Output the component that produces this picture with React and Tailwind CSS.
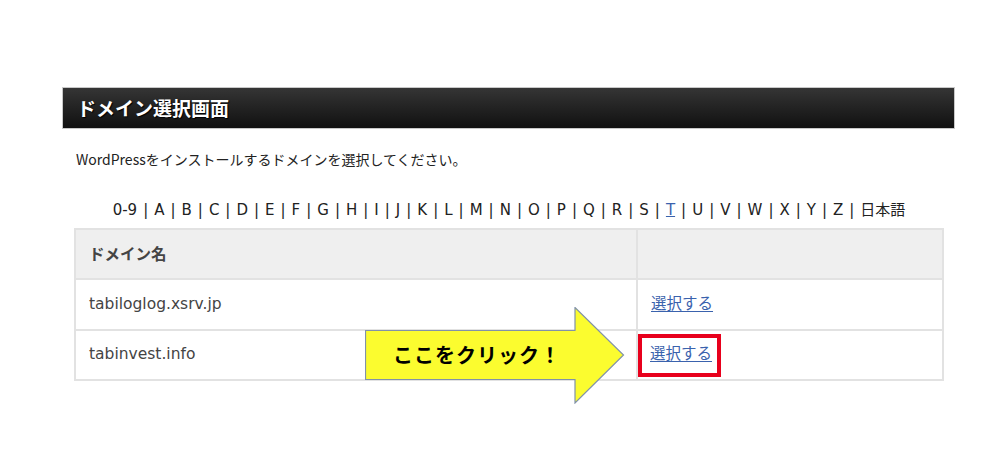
import React from 'react';

const letters = ['0-9', 'A', 'B', 'C', 'D', 'E', 'F', 'G', 'H', 'I', 'J', 'K', 'L', 'M', 'N', 'O', 'P', 'Q', 'R', 'S', 'T', 'U', 'V', 'W', 'X', 'Y', 'Z', '日本語'];

const font = { fontFamily: '"DejaVu Sans", "Noto Sans CJK JP", sans-serif' };

const SelectLink = () => (
  <a href="#" className="text-[#3a62ad] underline underline-offset-2 text-[15.5px]">
    選択する
  </a>
);

const ClickArrow = () => (
  <div className="absolute left-[365px] top-[307px] w-[260px] h-[97px]">
    <svg width="260" height="97" viewBox="0 0 260 97" className="absolute inset-0">
      <polygon
        points="0.5,23.5 210,23.5 210,0.5 258.5,48 210,96 210,72.5 0.5,72.5"
        fill="#fbfc2f"
        stroke="#8192a8"
        strokeWidth="1.2"
      />
    </svg>
    <div
      className="absolute left-[28px] top-[36px] text-[20px] font-bold text-black leading-[24px] tracking-[1px]"
      style={{ fontFamily: '"Noto Sans CJK JP", sans-serif' }}
    >
      ここをクリック！
    </div>
  </div>
);

export default function App() {
  return (
    <div className="relative w-[1000px] h-[465px] bg-white text-[#333]" style={font}>
      <div className="pt-[87px] pl-[62px]">
        <div className="w-[893px] h-[42px] border border-[#c8c8c8] bg-gradient-to-b from-[#353535] to-[#111] flex items-center pl-[14px]">
          <h1
            className="text-white font-bold text-[19px] [text-shadow:1px_1px_1px_#000]"
            style={{ fontFamily: '"Noto Sans CJK JP", sans-serif' }}
          >
            ドメイン選択画面
          </h1>
        </div>
      </div>

      <p
        className="mt-[20px] ml-[76px] text-[14px] text-[#222] leading-[20px]"
        style={{ fontFamily: '"Noto Sans CJK JP", sans-serif' }}
      >
        WordPressをインストールするドメインを選択してください。
      </p>

      <div className="mt-[31px] ml-[74px] w-[870px] flex justify-center text-[15px] text-[#222] leading-[20px]">
        {letters.map((l, i) => (
          <span key={l} className="flex">
            {l === 'T' ? (
              <a href="#" className="text-[#3a62ad] underline">T</a>
            ) : (
              <span>{l}</span>
            )}
            {i < letters.length - 1 && <span className="px-[6px]">|</span>}
          </span>
        ))}
      </div>

      <table className="mt-[8px] ml-[74px] w-[870px] border-collapse border-2 border-[#e2e2e2] text-[15.5px] text-[#444]">
        <tbody>
          <tr className="h-[50px] bg-[#efefef]">
            <td className="w-[562px] border-2 border-[#e2e2e2] pl-[13px] font-bold" style={{ fontFamily: '"Noto Sans CJK JP", sans-serif' }}>
              ドメイン名
            </td>
            <td className="border-2 border-[#e2e2e2]"></td>
          </tr>
          <tr className="h-[51px]">
            <td className="border-2 border-[#e2e2e2] pl-[13px]">tabiloglog.xsrv.jp</td>
            <td className="border-2 border-[#e2e2e2] pl-[13px]">
              <SelectLink />
            </td>
          </tr>
          <tr className="h-[50px]">
            <td className="border-2 border-[#e2e2e2] pl-[13px]">tabinvest.info</td>
            <td className="border-2 border-[#e2e2e2] pl-0">
              <span className="inline-flex items-center h-[43px] border-4 border-[#e8001c] pl-[8px] pr-[5px]">
                <SelectLink />
              </span>
            </td>
          </tr>
        </tbody>
      </table>

      <ClickArrow />
    </div>
  );
}
